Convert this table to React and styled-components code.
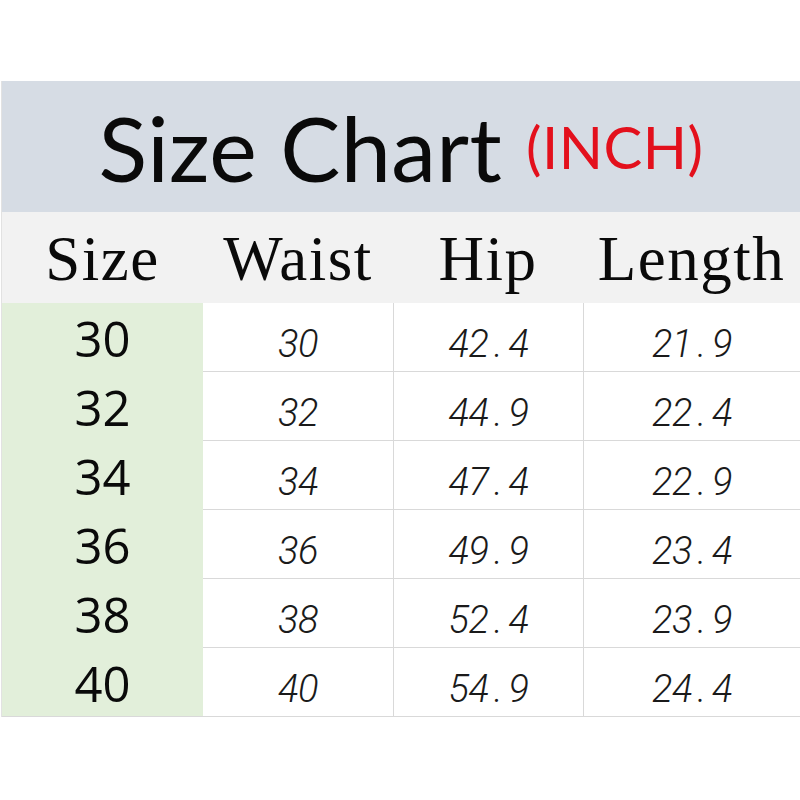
import React from "react";
import styled, { createGlobalStyle } from "styled-components";

const Global = createGlobalStyle`
  html, body { margin: 0; padding: 0; background: #ffffff; }
  #root { width: 800px; height: 800px; }
`;

const Page = styled.div`
  padding: 81px 1px 0 1px;
  box-sizing: border-box;
  width: 800px;
  height: 800px;
  background: #ffffff;
`;

const Table = styled.div`
  display: grid;
  grid-template-columns: 201px 190px 190px 217px;
  border-left: 1px solid #e2e2e2;
  border-right: 1px solid #d9d9d9;
  width: 798px;
  box-sizing: border-box;
`;

const TitleBand = styled.div`
  grid-column: 1 / -1;
  height: 131px;
  background: #d6dce4;
  display: flex;
  align-items: center;
  justify-content: center;
  box-sizing: border-box;
`;

const Title = styled.span`
  font-family: Lato, "Open Sans", sans-serif;
  font-size: 90px;
  color: #0a0a0a;
  letter-spacing: 0.3px;
  line-height: 1;
`;

const Unit = styled.span`
  font-family: Lato, "Open Sans", sans-serif;
  font-size: 58px;
  color: #e3101c;
  margin-left: 24px;
  letter-spacing: 0.5px;
`;

const HeadCell = styled.div`
  height: 91px;
  background: #f2f2f2;
  display: flex;
  align-items: center;
  justify-content: center;
  font-family: "Liberation Serif", "Times New Roman", serif;
  font-size: 63px;
  letter-spacing: 1.5px;
  color: #0a0a0a;
  padding-top: 4px;
  box-sizing: border-box;
`;

const SizeCell = styled.div`
  height: 69px;
  background: #e2efda;
  display: flex;
  align-items: center;
  justify-content: center;
  font-family: "Open Sans", sans-serif;
  font-size: 49px;
  color: #0a0a0a;
  box-sizing: border-box;
  border-bottom: 1px solid ${(p) => (p.$last ? "#d9d9d9" : "#e2efda")};
  padding-top: 2px;
`;

const ValueCell = styled.div`
  height: 69px;
  background: #ffffff;
  display: flex;
  align-items: center;
  justify-content: center;
  box-sizing: border-box;
  border-bottom: 1px solid #d9d9d9;
  border-left: ${(p) => (p.$first ? "none" : "1px solid #d9d9d9")};
  padding-top: 14px;
`;

const Glyph = styled.span`
  display: inline-block;
  width: 20px;
  text-align: center;
  font-family: Roboto, "Liberation Sans", sans-serif;
  font-style: italic;
  font-weight: 300;
  font-size: 38px;
  line-height: 1;
  color: #1a1a1a;
`;

const headers = ["Size", "Waist", "Hip", "Length"];
const rows = [
  ["30", "30", "42.4", "21.9"],
  ["32", "32", "44.9", "22.4"],
  ["34", "34", "47.4", "22.9"],
  ["36", "36", "49.9", "23.4"],
  ["38", "38", "52.4", "23.9"],
  ["40", "40", "54.9", "24.4"],
];

function Mono({ text }) {
  return text.split("").map((c, i) => <Glyph key={i}>{c}</Glyph>);
}

export default function App() {
  return (
    <>
      <Global />
      <Page>
        <Table>
          <TitleBand>
            <Title>Size Chart</Title>
            <Unit>(INCH)</Unit>
          </TitleBand>
          {headers.map((h) => (
            <HeadCell key={h}>{h}</HeadCell>
          ))}
          {rows.map((r, i) => (
            <React.Fragment key={r[0]}>
              <SizeCell $last={i === rows.length - 1}>{r[0]}</SizeCell>
              {r.slice(1).map((v, j) => (
                <ValueCell key={j} $first={j === 0}>
                  <Mono text={v} />
                </ValueCell>
              ))}
            </React.Fragment>
          ))}
        </Table>
      </Page>
    </>
  );
}
